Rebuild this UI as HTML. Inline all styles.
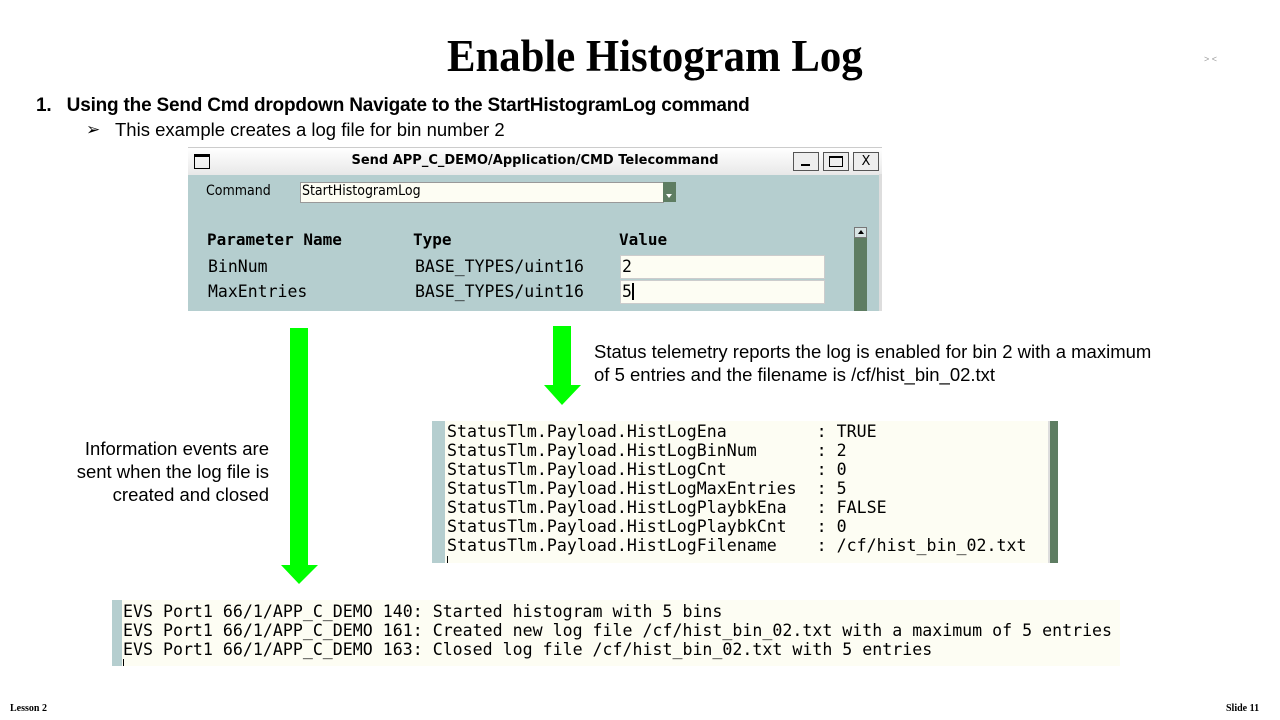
<!DOCTYPE html>
<html><head><meta charset="utf-8"><style>
body{margin:0;width:1280px;height:720px;background:#fff;position:relative;overflow:hidden;font-family:"Liberation Sans",sans-serif;}
.a{position:absolute;white-space:pre;}
.mono{font-family:"DejaVu Sans Mono",monospace;}
</style></head><body>
<div class="a" style="left:0;width:1310px;top:30px;text-align:center;font-family:'Liberation Serif',serif;font-weight:bold;font-size:45px;line-height:52px;"><span style="display:inline-block;transform:scaleX(0.95);">Enable Histogram Log</span></div>
<div class="a" style="left:1204px;top:54px;font-size:9px;color:#999;">&gt; &lt;</div>
<div class="a" style="left:36px;top:95px;font-size:19px;font-weight:bold;letter-spacing:-0.2px;">1.   Using the Send Cmd dropdown Navigate to the StartHistogramLog command</div>
<div class="a" style="left:86px;top:120px;font-size:17px;">➢</div>
<div class="a" style="left:115px;top:119px;font-size:18.5px;letter-spacing:0;">This example creates a log file for bin number 2</div>

<!-- dialog -->
<div class="a" style="left:188px;top:147px;width:694px;height:164px;background:#b5cecf;">
 <div style="position:absolute;left:0;top:0;width:694px;height:27px;background:linear-gradient(#fff,#e8e8e8);border-top:1px solid #ccc;"></div>
 <div style="position:absolute;left:6px;top:7px;width:14px;height:11px;border:1.5px solid #000;border-top-width:3px;"></div>
 <div class="a" style="left:0;width:694px;text-align:center;top:6px;font-family:'DejaVu Sans',sans-serif;font-weight:bold;font-size:13px;">Send APP_C_DEMO/Application/CMD Telecommand</div>
 <div style="position:absolute;left:605px;top:5px;width:24px;height:17px;border:1px solid #555;background:#eee;"><div style="position:absolute;left:7px;top:11px;width:9px;height:2px;background:#000"></div></div>
 <div style="position:absolute;left:635px;top:5px;width:24px;height:17px;border:1px solid #555;background:#eee;"><div style="position:absolute;left:5px;top:3px;width:12px;height:8px;border:1.5px solid #000;border-top-width:2px"></div></div>
 <div style="position:absolute;left:665px;top:5px;width:24px;height:17px;border:1px solid #555;background:#eee;font-family:'DejaVu Sans';font-size:13px;text-align:center;line-height:17px;">X</div>
 <div style="position:absolute;left:691px;top:27px;width:3px;height:137px;background:#ddd"></div>
 <div class="a" style="left:18px;top:36px;font-family:'DejaVu Sans Condensed','DejaVu Sans',sans-serif;font-size:14px;">Command</div>
 <div style="position:absolute;left:112px;top:35px;width:362px;height:19px;background:#fdfdf3;border:1px solid #999;"></div>
 <div class="a" style="left:114px;top:36px;font-family:'DejaVu Sans Condensed','DejaVu Sans',sans-serif;font-size:14px;">StartHistogramLog</div>
 <div style="position:absolute;left:475px;top:35px;width:13px;height:20px;background:#5e7d62;"><div style="position:absolute;left:3px;top:12px;width:0;height:0;border-left:3px solid transparent;border-right:3px solid transparent;border-top:4px solid #fff"></div></div>
 <div class="a mono" style="left:19px;top:83px;font-size:16px;font-weight:bold;">Parameter Name</div>
 <div class="a mono" style="left:225px;top:83px;font-size:16px;font-weight:bold;">Type</div>
 <div class="a mono" style="left:431px;top:83px;font-size:16px;font-weight:bold;">Value</div>
 <div class="a mono" style="left:20px;top:110px;font-size:16.5px;">BinNum</div>
 <div class="a mono" style="left:227px;top:110px;font-size:16.5px;">BASE_TYPES/uint16</div>
 <div style="position:absolute;left:432px;top:108px;width:203px;height:22px;background:#fdfdf3;border:1px solid #ccc"></div>
 <div class="a mono" style="left:434px;top:110px;font-size:16.5px;">2</div>
 <div class="a mono" style="left:20px;top:135px;font-size:16.5px;">MaxEntries</div>
 <div class="a mono" style="left:227px;top:135px;font-size:16.5px;">BASE_TYPES/uint16</div>
 <div style="position:absolute;left:432px;top:133px;width:203px;height:22px;background:#fdfdf3;border:1px solid #ccc"></div>
 <div class="a mono" style="left:434px;top:135px;font-size:16.5px;">5</div>
 <div style="position:absolute;left:444px;top:136px;width:1.5px;height:17px;background:#000"></div>
 <div style="position:absolute;left:666px;top:80px;width:13px;height:84px;background:#5e7d62;"></div>
 <div style="position:absolute;left:666px;top:80px;width:13px;height:11px;background:#d8e4e4;border:1px solid #777;box-sizing:border-box"><div style="position:absolute;left:3px;top:2px;border-left:3px solid transparent;border-right:3px solid transparent;border-bottom:4px solid #000"></div></div>
</div>

<!-- arrows -->
<svg class="a" style="left:0;top:0" width="1280" height="720">
 <polygon points="290,328 308,328 308,565 318,565 299,584 281,565 290,565" fill="#00ff00"/>
 <polygon points="553,326 571,326 571,385 581,385 562,405 544,385 553,385" fill="#00ff00"/>
</svg>

<div class="a" style="left:594px;top:340px;font-size:18.5px;line-height:23px;letter-spacing:0;">Status telemetry reports the log is enabled for bin 2 with a maximum
of 5 entries and the filename is /cf/hist_bin_02.txt</div>
<div class="a" style="left:0;width:269px;top:437px;font-size:18.5px;line-height:23px;text-align:right;">Information events are
sent when the log file is
created and closed</div>

<!-- telemetry box -->
<div style="position:absolute;left:432px;top:421px;width:626px;height:142px;background:#fdfdf3;"></div>
<div style="position:absolute;left:432px;top:421px;width:13px;height:142px;background:#b5cecf;"></div>
<div style="position:absolute;left:1048px;top:421px;width:3px;height:142px;background:#ddd;"></div>
<div style="position:absolute;left:1050px;top:421px;width:8px;height:142px;background:#5e7d62;"></div>
<div class="a mono" style="left:447px;top:422px;font-size:16.6px;line-height:19px;">StatusTlm.Payload.HistLogEna         : TRUE
StatusTlm.Payload.HistLogBinNum      : 2
StatusTlm.Payload.HistLogCnt         : 0
StatusTlm.Payload.HistLogMaxEntries  : 5
StatusTlm.Payload.HistLogPlaybkEna   : FALSE
StatusTlm.Payload.HistLogPlaybkCnt   : 0
StatusTlm.Payload.HistLogFilename    : /cf/hist_bin_02.txt</div>
<div style="position:absolute;left:447px;top:556px;width:1px;height:7px;background:#000"></div>

<!-- events box -->
<div style="position:absolute;left:112px;top:600px;width:1008px;height:66px;background:#fdfdf3;"></div>
<div style="position:absolute;left:112px;top:600px;width:10px;height:66px;background:#b5cecf;"></div>
<div class="a mono" style="left:123px;top:602px;font-size:16.6px;line-height:19px;">EVS Port1 66/1/APP_C_DEMO 140: Started histogram with 5 bins
EVS Port1 66/1/APP_C_DEMO 161: Created new log file /cf/hist_bin_02.txt with a maximum of 5 entries
EVS Port1 66/1/APP_C_DEMO 163: Closed log file /cf/hist_bin_02.txt with 5 entries</div>
<div style="position:absolute;left:123px;top:659px;width:1px;height:7px;background:#000"></div>

<div class="a" style="left:10px;top:703px;font-family:'Liberation Serif',serif;font-weight:bold;font-size:10px;">Lesson 2</div>
<div class="a" style="left:1226px;top:703px;font-family:'Liberation Serif',serif;font-weight:bold;font-size:10px;">Slide 11</div>
</body></html>
